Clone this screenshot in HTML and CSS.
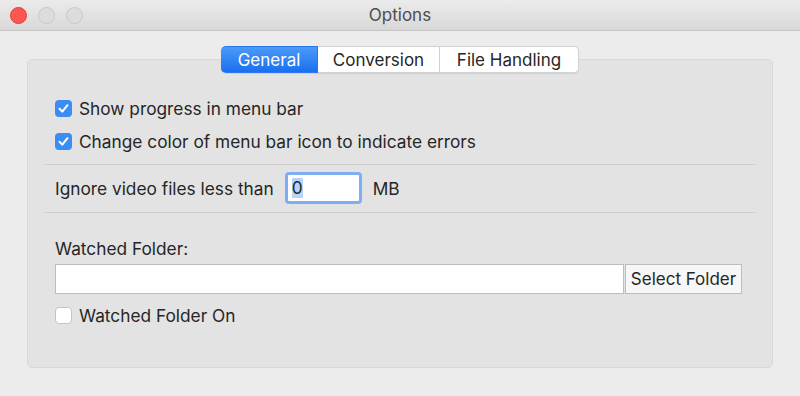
FILE: index.html
```html
<!DOCTYPE html>
<html lang="en">
<head>
    <meta charset="UTF-8">
    <meta name="viewport" content="width=device-width, initial-scale=1.0">
    <title>Options</title>
    <link rel="stylesheet" href="styles.css">
</head>
<body>
    <div class="window">
        <div class="titlebar">
            <div class="lights">
                <span class="light close"></span>
                <span class="light"></span>
                <span class="light"></span>
            </div>
            <div class="title">Options</div>
        </div>

        <div class="content">
            <div class="tabs">
                <div class="tab active">General</div>
                <div class="tab">Conversion</div>
                <div class="tab">File Handling</div>
            </div>

            <div class="panel">
                <label class="check-row">
                    <span class="checkbox checked">
                        <svg viewBox="0 0 17 17" width="17" height="17"><path d="M4.5 8.8 L7.3 11.6 L12.5 5.2" fill="none" stroke="#fff" stroke-width="2" stroke-linecap="round" stroke-linejoin="round"/></svg>
                    </span>
                    Show progress in menu bar
                </label>
                <label class="check-row">
                    <span class="checkbox checked">
                        <svg viewBox="0 0 17 17" width="17" height="17"><path d="M4.5 8.8 L7.3 11.6 L12.5 5.2" fill="none" stroke="#fff" stroke-width="2" stroke-linecap="round" stroke-linejoin="round"/></svg>
                    </span>
                    Change color of menu bar icon to indicate errors
                </label>

                <div class="separator"></div>

                <div class="size-row">
                    <span>Ignore video files less than</span>
                    <div class="number-field"><span class="selected">0</span></div>
                    <span>MB</span>
                </div>

                <div class="separator"></div>

                <div class="folder-label">Watched Folder:</div>
                <div class="folder-row">
                    <div class="folder-field"></div>
                    <div class="folder-button">Select Folder</div>
                </div>

                <label class="check-row last">
                    <span class="checkbox"></span>
                    Watched Folder On
                </label>
            </div>
        </div>
    </div>
</body>
</html>
```

FILE: styles.css
```css
* {
    box-sizing: border-box;
}

body {
    margin: 0;
    padding: 0;
    font-family: Inter, "Liberation Sans", sans-serif;
    font-size: 17.3px;
    color: #262626;
    background-color: #ececec;
}

.window {
    width: 800px;
    height: 396px;
    background-color: #ececec;
}

.titlebar {
    height: 31px;
    display: flex;
    align-items: center;
    position: relative;
    background: linear-gradient(#ebebeb, #d8d8d8);
    border-bottom: 1px solid #c4c4c4;
}

.lights {
    display: flex;
    gap: 11px;
    padding-left: 10px;
}

.light {
    width: 17px;
    height: 17px;
    border-radius: 50%;
    background-color: #dcdcdc;
    border: 1px solid #c8c8c8;
}

.light.close {
    background-color: #fc5753;
    border-color: #df3d37;
}

.title {
    position: absolute;
    left: 0;
    right: 0;
    text-align: center;
    font-size: 17px;
    color: #4d4d4d;
}

.content {
    padding: 15px 27px 0 27px;
}

.tabs {
    display: flex;
    justify-content: center;
    position: relative;
    z-index: 1;
    margin-bottom: -14px;
}

.tab {
    height: 27px;
    display: flex;
    align-items: center;
    justify-content: center;
    background-color: #fff;
    border: 1px solid #d2d2d2;
    border-left: none;
    font-size: 17px;
    color: #262626;
    box-shadow: 0 1px 1px rgba(0, 0, 0, 0.08);
}

.tab:nth-child(1) {
    width: 97px;
    border-radius: 5px 0 0 5px;
}

.tab:nth-child(2) {
    width: 122px;
}

.tab:nth-child(3) {
    width: 139px;
    border-radius: 0 5px 5px 0;
}

.tab.active {
    background: linear-gradient(#4a9bf8, #1b6ff0);
    border-color: #2a78ef;
    color: #fff;
}

.panel {
    height: 309px;
    background-color: #e3e3e3;
    border: 1px solid #d8d8d8;
    border-radius: 5px;
    padding: 32px 16px 0 16px;
}

.check-row {
    height: 33px;
    display: flex;
    align-items: center;
    gap: 7px;
    padding-left: 11px;
}

.checkbox {
    width: 17px;
    height: 17px;
    border-radius: 4px;
    background-color: #fff;
    border: 1px solid #c4c4c4;
    display: flex;
}

.checkbox.checked {
    background-color: #3b8cf5;
    border: none;
}

.separator {
    height: 1px;
    background-color: #cfcfcf;
    margin-top: 6px;
}

.size-row + .separator {
    margin-top: 0;
}

.size-row {
    display: flex;
    align-items: center;
    gap: 11px;
    padding: 7px 0 8px 11px;
}

.number-field {
    width: 77px;
    height: 32px;
    background-color: #fff;
    border: 3px solid #7fadf1;
    border-radius: 4px;
    display: flex;
    align-items: center;
    padding-left: 4px;
}

.selected {
    background-color: #b5d3fb;
    line-height: 20px;
}

.folder-label {
    margin-top: 26px;
    line-height: 20px;
    padding-left: 11px;
}

.folder-row {
    display: flex;
    margin-top: 5px;
    padding-left: 11px;
}

.folder-field {
    width: 569px;
    height: 30px;
    background-color: #fff;
    border: 1px solid #bdbdbd;
}

.folder-button {
    width: 117px;
    height: 30px;
    margin-left: 1px;
    background-color: #f7f7f7;
    border: 1px solid #bdbdbd;
    display: flex;
    align-items: center;
    justify-content: center;
    font-size: 17px;
}

.check-row.last {
    margin-top: 5px;
}
```
